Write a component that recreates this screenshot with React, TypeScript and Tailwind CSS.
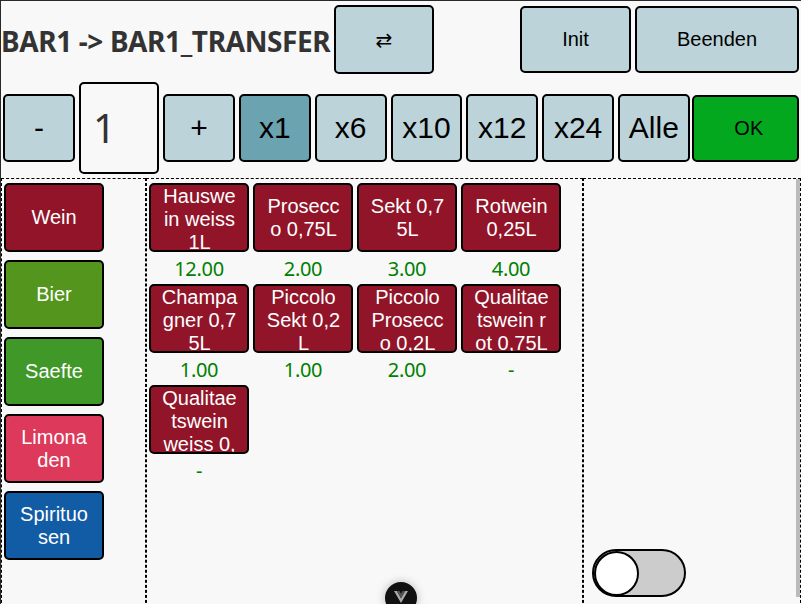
import type { ReactNode } from "react";

const categories = [
  { lines: ["Wein"], color: "bg-[#911428]" },
  { lines: ["Bier"], color: "bg-[#53951d]" },
  { lines: ["Saefte"], color: "bg-[#409828]" },
  { lines: ["Limona", "den"], color: "bg-[#dc395b]" },
  { lines: ["Spirituo", "sen"], color: "bg-[#125ba5]" },
];

const products = [
  { lines: ["Hauswe", "in weiss", "1L"], amount: "12.00" },
  { lines: ["Prosecc", "o 0,75L"], amount: "2.00" },
  { lines: ["Sekt 0,7", "5L"], amount: "3.00" },
  { lines: ["Rotwein", "0,25L"], amount: "4.00" },
  { lines: ["Champa", "gner 0,7", "5L"], amount: "1.00" },
  { lines: ["Piccolo", "Sekt 0,2", "L"], amount: "1.00" },
  { lines: ["Piccolo", "Prosecc", "o 0,2L"], amount: "2.00" },
  { lines: ["Qualitae", "tswein r", "ot 0,75L"], amount: "-" },
  { lines: ["Qualitae", "tswein", "weiss 0,"], amount: "-" },
];

const factors = ["x1", "x6", "x10", "x12", "x24", "Alle"];

function Button({ className, children }: { className: string; children: ReactNode }) {
  return (
    <button
      className={`flex shrink-0 items-center justify-center rounded-[5px] border-2 border-black font-['Liberation_Sans',Arial,sans-serif] text-black ${className}`}
    >
      {children}
    </button>
  );
}

function Tile({ lines, color }: { lines: string[]; color: string }) {
  return (
    <button
      className={`flex h-[69px] w-[100px] shrink-0 flex-col [justify-content:safe_center] overflow-hidden rounded-[5px] border-2 border-black font-['Liberation_Sans',Arial,sans-serif] text-[20px] leading-[23px] text-white ${color}`}
    >
      {lines.map((line) => (
        <span key={line} className="block w-full shrink-0 text-center whitespace-nowrap">
          {line}
        </span>
      ))}
    </button>
  );
}

export default function App() {
  return (
    <div className="relative flex h-[604px] w-[801px] flex-col overflow-hidden border-t border-l border-[#2b282b] bg-[#f8f8f8] font-['Noto_Sans',sans-serif] text-[#333]">
      <header className="flex h-[81px] shrink-0 items-start pr-[2px]">
        <h1 className="mt-[20px] w-[333px] shrink-0 text-[28px] leading-[40px] font-bold tracking-[-0.38px] whitespace-nowrap">
          BAR1 -&gt; BAR1_TRANSFER
        </h1>
        <Button className="mt-1 h-[69px] w-[100px] bg-[#bcd4d9] text-[20px]">
          <span className="font-['DejaVu_Sans',sans-serif]">⇄</span>
        </Button>
        <div className="mt-[5px] ml-auto flex gap-1">
          <Button className="h-[67px] w-[111px] bg-[#bcd4d9] pb-[2px] text-[20px]">Init</Button>
          <Button className="h-[67px] w-[164px] bg-[#bcd4d9] pb-[2px] text-[20px]">Beenden</Button>
        </div>
      </header>

      <div className="flex h-[92px] shrink-0 items-center gap-1 pl-[2px]">
        <Button className="h-[68px] w-[72px] bg-[#bcd4d9] pb-[2px] text-[30px]">-</Button>
        <div className="flex h-[92px] w-[80px] shrink-0 items-center rounded-[5px] border-2 border-black pl-3 text-[40px] leading-none">
          1
        </div>
        <Button className="h-[68px] w-[72px] bg-[#bcd4d9] pb-[2px] text-[30px]">+</Button>
        {factors.map((factor) => (
          <Button
            key={factor}
            className={`h-[68px] w-[71.8px] pb-[2px] text-[30px] ${factor === "x1" ? "bg-[#6ba3b0]" : "bg-[#bcd4d9]"}`}
          >
            {factor}
          </Button>
        ))}
        <Button className="mt-px -ml-[2px] h-[67px] w-[107px] bg-[#04a81f] pb-[2px] pl-[7px] text-[20px]">OK</Button>
      </div>

      <main className="mt-1 flex h-[440px] shrink-0">
        <section className="flex w-[145px] shrink-0 flex-col gap-2 border border-dashed border-black pt-1 pl-[2px]">
          {categories.map((category) => (
            <Tile key={category.lines[0]} lines={category.lines} color={category.color} />
          ))}
        </section>
        <section className="grid w-[437px] shrink-0 auto-rows-[101px] grid-cols-[repeat(4,100px)] content-start gap-x-1 border border-dashed border-black pt-1 pl-[2px]">
          {products.map((product) => (
            <div key={product.lines.join("")} className="flex flex-col items-center">
              <Tile lines={product.lines} color="bg-[#911428] pl-px" />
              <span className="mt-[2px] text-[20px] leading-[29px] tracking-[-0.3px] text-[#008000]">{product.amount}</span>
            </div>
          ))}
        </section>
        <section className="flex w-[218px] shrink-0 items-start justify-between border border-dashed border-black">
          <div className="mt-[370px] ml-2 flex h-12 w-[94px] items-center rounded-full border-2 border-black bg-[#ccc]">
            <div className="h-[45px] w-[45px] shrink-0 rounded-full border-2 border-black bg-white" />
          </div>
          <div className="h-[418px] w-1 bg-[#bbb]" />
        </section>
      </main>

      <div className="absolute top-[581px] left-[384px] flex h-8 w-8 justify-center rounded-full bg-[#111] pt-[9px] shadow-[0_0_10px_rgba(0,0,0,0.25)]">
        <svg width="14" height="12" viewBox="0 0 14 12">
          <path d="M0 0h2.8L7 7.3 11.2 0H14L7 12z" fill="#aaa" />
          <path d="M2.8 0h2.6L7 2.8 8.6 0h2.6L7 7.3z" fill="#555" />
        </svg>
      </div>
    </div>
  );
}
